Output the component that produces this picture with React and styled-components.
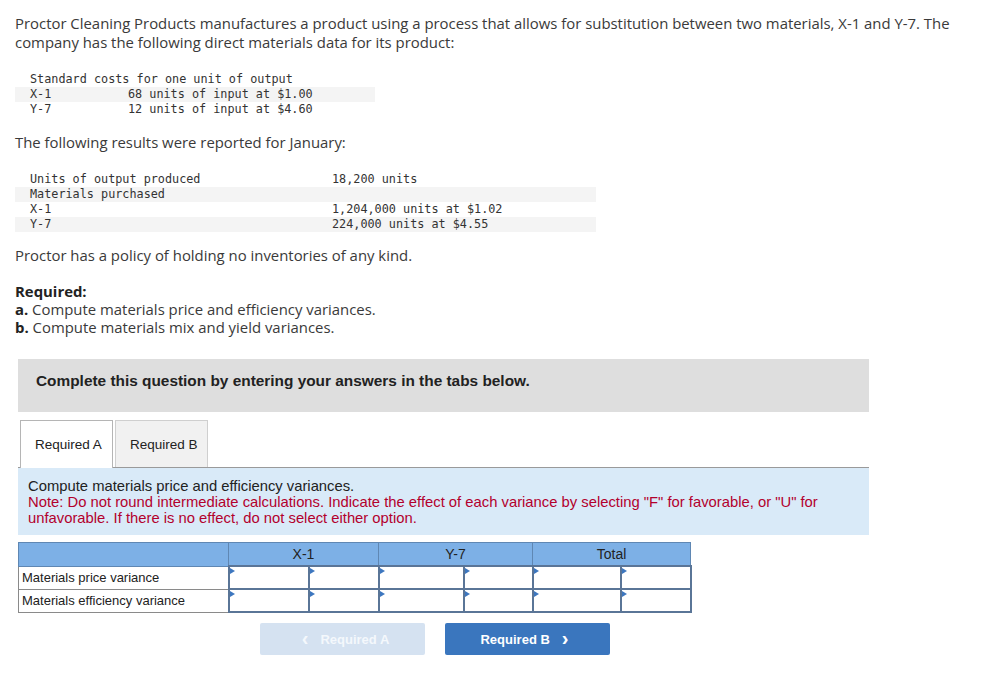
import styled, { createGlobalStyle } from "styled-components";

const GlobalStyle = createGlobalStyle`
  body {
    margin: 0;
    background: #ffffff;
  }
`;

const standardRows = [
  { label: "Standard costs for one unit of output", value: "" },
  { label: "X-1", value: "68 units of input at $1.00" },
  { label: "Y-7", value: "12 units of input at $4.60" },
];

const resultRows = [
  { label: "Units of output produced", value: "18,200 units" },
  { label: "Materials purchased", value: "" },
  { label: "X-1", value: "1,204,000 units at $1.02" },
  { label: "Y-7", value: "224,000 units at $4.55" },
];

const varianceRows = ["Materials price variance", "Materials efficiency variance"];

function App() {
  return (
    <Page>
      <GlobalStyle />
      <Para>
        Proctor Cleaning Products manufactures a product using a process that allows for
        substitution between two materials, X-1 and Y-7. The company has the following direct
        materials data for its product:
      </Para>

      <DataTable $width={360} $top={20}>
        {standardRows.map((r, i) => (
          <DataRow key={i} $striped={i === 1}>
            <DataLabel $width={98}>{r.label}</DataLabel>
            <span>{r.value}</span>
          </DataRow>
        ))}
      </DataTable>

      <Para $top={16}>The following results were reported for January:</Para>

      <DataTable $width={581} $top={20}>
        {resultRows.map((r, i) => (
          <DataRow key={i} $striped={i % 2 === 1}>
            <DataLabel $width={302}>{r.label}</DataLabel>
            <span>{r.value}</span>
          </DataRow>
        ))}
      </DataTable>

      <Para $top={14}>Proctor has a policy of holding no inventories of any kind.</Para>

      <Required>
        <strong>Required:</strong>
        <div>
          <strong>a.</strong> Compute materials price and efficiency variances.
        </div>
        <div>
          <strong>b.</strong> Compute materials mix and yield variances.
        </div>
      </Required>

      <Workspace>
        <Banner>Complete this question by entering your answers in the tabs below.</Banner>

        <Tabs>
          <Tab $active>Required A</Tab>
          <Tab>Required B</Tab>
        </Tabs>

        <Instructions>
          <div>Compute materials price and efficiency variances.</div>
          <Note>
            Note: Do not round intermediate calculations. Indicate the effect of each variance by
            selecting "F" for favorable, or "U" for unfavorable. If there is no effect, do not
            select either option.
          </Note>
        </Instructions>

        <AnswerTable>
          <colgroup>
            <col style={{ width: 210 }} />
            <col style={{ width: 80 }} />
            <col style={{ width: 70 }} />
            <col style={{ width: 85 }} />
            <col style={{ width: 69 }} />
            <col style={{ width: 88 }} />
            <col style={{ width: 70 }} />
          </colgroup>
          <thead>
            <tr>
              <HeadCell />
              <HeadCell colSpan={2}>X-1</HeadCell>
              <HeadCell colSpan={2}>Y-7</HeadCell>
              <HeadCell colSpan={2}>Total</HeadCell>
            </tr>
          </thead>
          <tbody>
            {varianceRows.map((label) => (
              <tr key={label}>
                <LabelCell>{label}</LabelCell>
                {[0, 1, 2, 3, 4, 5].map((c) => (
                  <InputCell key={c} />
                ))}
              </tr>
            ))}
          </tbody>
        </AnswerTable>

        <NavRow>
          <NavButton $disabled>
            <Chevron>‹</Chevron> Required A
          </NavButton>
          <NavButton>
            Required B <Chevron>›</Chevron>
          </NavButton>
        </NavRow>
      </Workspace>
    </Page>
  );
}

const Page = styled.div`
  padding: 14px 15px 30px 15px;
  font-family: "Open Sans", Lato, sans-serif;
  color: #3a3a3a;
`;

const Para = styled.p`
  margin: ${(p) => p.$top || 0}px 0 0 0;
  width: 950px;
  font-size: 14.9px;
  line-height: 19px;
`;

const DataTable = styled.div`
  margin-top: ${(p) => p.$top}px;
  width: ${(p) => p.$width}px;
  font-family: "DejaVu Sans Mono", "Liberation Mono", monospace;
  font-size: 11.8px;
  color: #333333;
`;

const DataRow = styled.div`
  display: flex;
  height: 15px;
  line-height: 15px;
  padding-left: 15px;
  background: ${(p) => (p.$striped ? "#f4f4f4" : "transparent")};
  white-space: pre;
`;

const DataLabel = styled.span`
  display: inline-block;
  width: ${(p) => p.$width}px;
  flex-shrink: 0;
`;

const Required = styled.div`
  margin-top: 17px;
  font-size: 14.9px;
  line-height: 18px;
  strong {
    font-weight: 700;
    color: #222;
  }
`;

const Workspace = styled.div`
  margin-top: 23px;
  margin-left: 3px;
  width: 851px;
`;

const Banner = styled.div`
  background: #dedede;
  padding: 13px 18px 22px 18px;
  font-family: "Liberation Sans", Arial, sans-serif;
  font-weight: 700;
  font-size: 15.4px;
  line-height: 18px;
  color: #222;
`;

const Tabs = styled.div`
  display: flex;
  gap: 2px;
  margin-top: 8px;
  padding-left: 2px;
  border-bottom: 1px solid #9a9a9a;
`;

const Tab = styled.div`
  width: 93px;
  box-sizing: border-box;
  padding-left: 14px;
  display: flex;
  align-items: center;
  font-family: "Liberation Sans", Arial, sans-serif;
  font-size: 13.5px;
  color: #222;
  background: ${(p) => (p.$active ? "#ffffff" : "#f1f1f1")};
  border: 1px solid ${(p) => (p.$active ? "#b5b5b5" : "#cfcfcf")};
  border-bottom: none;
  margin-bottom: ${(p) => (p.$active ? "-1px" : "0")};
  height: ${(p) => (p.$active ? "48px" : "47px")};
`;

const Instructions = styled.div`
  background: #d9eaf8;
  padding: 10px 10px 9px 10px;
  font-family: "Liberation Sans", Arial, sans-serif;
  font-size: 14.8px;
  line-height: 16px;
  color: #222;
`;

const Note = styled.div`
  color: #b3002d;
`;

const AnswerTable = styled.table`
  margin-top: 7px;
  width: 672px;
  table-layout: fixed;
  border-collapse: collapse;
  font-family: "Liberation Sans", Arial, sans-serif;
`;

const HeadCell = styled.th`
  height: 22px;
  padding: 0;
  background: #7db0e6;
  border: 1px solid #5f87b3;
  font-weight: 400;
  font-size: 14px;
  color: #222;
  text-align: center;
`;

const LabelCell = styled.td`
  height: 21px;
  padding: 0 0 0 3px;
  border: 1px solid #8a8a8a;
  font-size: 13px;
  color: #222;
  white-space: nowrap;
`;

const InputCell = styled.td`
  position: relative;
  height: 21px;
  padding: 0;
  border: 2px solid #5a7597;
  background: #fff;
  &::before {
    content: "";
    position: absolute;
    top: 1px;
    left: 0;
    border-top: 3px solid transparent;
    border-bottom: 3px solid transparent;
    border-left: 5px solid #3d77bf;
  }
`;

const NavRow = styled.div`
  display: flex;
  gap: 20px;
  margin-top: 10px;
  padding-left: 242px;
`;

const NavButton = styled.div`
  width: 165px;
  height: 32px;
  display: flex;
  align-items: center;
  justify-content: center;
  gap: 6px;
  border-radius: 2px;
  font-family: "Liberation Sans", Arial, sans-serif;
  font-weight: 700;
  font-size: 13px;
  background: ${(p) => (p.$disabled ? "#d5e2f1" : "#3a76be")};
  color: ${(p) => (p.$disabled ? "#f4f8fc" : "#ffffff")};
`;

const Chevron = styled.span`
  font-size: 20px;
  line-height: 20px;
  margin: 0 6px;
  position: relative;
  top: -1px;
`;

export default App;
